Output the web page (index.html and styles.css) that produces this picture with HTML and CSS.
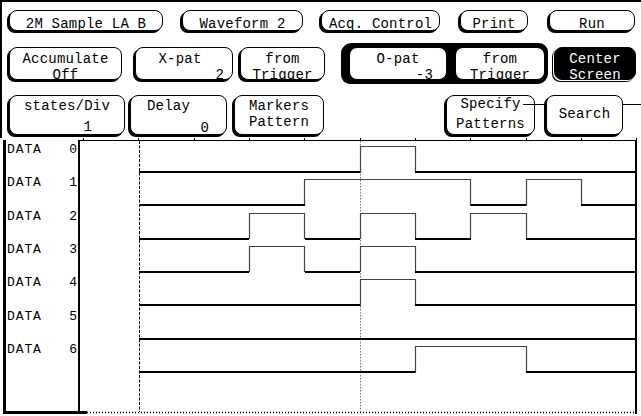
FILE: index.html
```html
<!DOCTYPE html>
<html lang="en">
<head>
  <meta charset="UTF-8">
  <title>Waveform 2</title>
<link rel="stylesheet" href="styles.css">
</head>
<body>

<div class="screen">

 <!-- MENU FIELDS -->
 <div class="controls">

  <div class="row row-top">
    <div class="btn b-sample">2M Sample LA B</div>
    <div class="btn b-wave">Waveform 2</div>
    <div class="btn b-acq">Acq. Control</div>
    <div class="btn b-print">Print</div>
    <div class="btn b-run">Run</div>
  </div>

  <div class="row row-mid">
    <div class="btn b-accum"><span class="ln">Accumulate</span><span class="ln">Off</span></div>
    <div class="btn b-xpat"><span class="ln pull">X-pat</span><span class="ln val">2</span></div>
    <div class="btn b-from"><span class="ln">from</span><span class="ln">Trigger</span></div>
    <div class="group">
      <div class="btn inner b-opat"><span class="ln">O-pat</span><span class="ln val">-3</span></div>
      <div class="btn inner b-from2"><span class="ln">from</span><span class="ln">Trigger</span></div>
    </div>
    <div class="btn inv b-center"><span class="ln">Center</span><span class="ln">Screen</span></div>
  </div>

  <div class="row row-low">
    <div class="btn b-states"><span class="ln">states/Div</span><span class="ln val">1</span></div>
    <div class="btn b-delay"><span class="ln lead">Delay</span><span class="ln val">0</span></div>
    <div class="btn b-markers"><span class="ln">Markers</span><span class="ln">Pattern</span></div>
    <div class="btn b-specify"><span class="ln">Specify</span><span class="ln">Patterns</span></div>
    <div class="btn b-search">Search</div>
  </div>

 </div>

 <!-- WAVEFORM DISPLAY -->
 <div class="wave">
  <div class="labels">
    <div class="label"><span>DATA</span><span>0</span></div>
    <div class="label"><span>DATA</span><span>1</span></div>
    <div class="label"><span>DATA</span><span>2</span></div>
    <div class="label"><span>DATA</span><span>3</span></div>
    <div class="label"><span>DATA</span><span>4</span></div>
    <div class="label"><span>DATA</span><span>5</span></div>
    <div class="label"><span>DATA</span><span>6</span></div>
  </div>

  <svg class="trace" width="561" height="278" viewBox="0 0 561 278">
    <!-- frame -->
    <path class="frame" d="M0 2.5H557"/>
    <path class="frame" d="M3.5 0V2.5M58.5 0V2.5M114.5 0V2.5M169.5 0V2.5M224.5 0V2.5M280.5 0V2.5M335.5 0V2.5M390.5 0V2.5M446.5 0V2.5M501.5 0V2.5M556.5 0V2.5"/>
    <path class="side" d="M556 2V276"/>
    <path class="start" d="M59.5 3V274"/>
    <path class="marker" d="M280.5 3V274"/>
    <path class="base" d="M0 274.5H7"/>
    <path class="dots" d="M7 274.5H556"/>

    <!-- signal edges -->
    <path class="edge" d="M59 34.5H280.5V8.5H335.5V34.5H555"/>
    <path class="edge" d="M59 67.5H224.5V41.5H390.5V67.5H446.5V41.5H501.5V67.5H555"/>
    <path class="edge" d="M59 100.5H169.5V75.5H224.5V100.5H280.5V75.5H335.5V100.5H390.5V75.5H446.5V100.5H555"/>
    <path class="edge" d="M59 133.5H169.5V108.5H224.5V133.5H280.5V108.5H335.5V133.5H555"/>
    <path class="edge" d="M59 167.5H280.5V141.5H335.5V167.5H555"/>
    <path class="edge" d="M59 234.5H335.5V208.5H446.5V234.5H555"/>

    <!-- low levels drawn heavier -->
    <path class="low" d="M59 34H280M335 34H555"/>
    <path class="low" d="M59 67H225M391 67H446M501 67H555"/>
    <path class="low" d="M59 101H169M225 101H280M335 101H391M446 101H555"/>
    <path class="low" d="M59 134H169M225 134H280M335 134H555"/>
    <path class="low" d="M59 167H280M335 167H555"/>
    <path class="low" d="M59 201H555"/>
    <path class="low" d="M59 234H335M446 234H555"/>
  </svg>
 </div>

</div>

</body>
</html>
```

FILE: styles.css
```css
body {
    margin: 0;
    background-color: #fff;
    color: #000;
    font-family: "Liberation Mono", "DejaVu Sans Mono", monospace;
}

.screen {
    width: 641px;
    height: 416px;
    overflow: hidden;
    border-top: 2px solid #000;
    box-sizing: border-box;
}

/* menu fields */

.controls {
    border-left: 2px solid #000;
    padding-top: 8px;
    padding-bottom: 3px;
}

.row {
    display: flex;
}

.row-top {
    height: 21px;
}

.row-mid {
    height: 40px;
    margin-top: 12px;
    align-items: center;
}

.row-low {
    height: 40px;
    margin-top: 12px;
    align-items: flex-start;
}

.btn {
    box-sizing: border-box;
    border: 1px solid #000;
    border-radius: 8px;
    box-shadow: -2px 2px 0 #000;
    background-color: #fff;
    font-size: 14px;
    letter-spacing: 0.2px;
    line-height: 16px;
    text-align: center;
    white-space: pre;
}

.ln {
    display: block;
}

.val {
    text-align: right;
}

.row-top .btn {
    height: 21px;
    padding-top: 5px;
}

.row-mid .btn {
    height: 33px;
    padding-top: 3px;
}

.row-low .btn {
    height: 40px;
    padding-top: 2px;
}

.b-sample  { width: 154px; margin-left: 7px; }
.b-wave    { width: 121px; margin-left: 19px; }
.b-acq     { width: 119px; margin-left: 18px; }
.b-print   { width: 68px;  margin-left: 20px; }
.b-run     { width: 86px;  margin-left: 21px; }

.b-accum   { width: 113px; margin-left: 7px; }
.b-xpat    { width: 98px;  margin-left: 13px; }
.b-xpat .pull { padding-right: 8px; }
.b-xpat .val  { padding-right: 8px; }
.b-from    { width: 85px;  margin-left: 7px; }

.group {
    display: flex;
    gap: 8px;
    box-sizing: border-box;
    width: 206px;
    height: 40px;
    margin-left: 17px;
    padding: 4px 3px 3px 7px;
    border-radius: 9px;
    background-color: #000;
    box-shadow: -1px 1px 0 #000;
}

.group .inner {
    box-shadow: none;
}

.b-opat    { width: 98px; }
.b-opat .val { padding-right: 13px; }
.b-from2   { width: 90px; }

.b-center {
    width: 82px;
    height: 34px;
    margin-left: 6px;
}

.inv {
    background-color: #000;
    color: #fff;
    box-shadow: -1px 1px 0 #fff, -2px 2px 0 #000;
}

.b-states  { width: 116px; margin-left: 7px; }
.b-states .val { margin-top: 5px; padding-right: 32px; }
.b-delay   { width: 97px;  margin-left: 5px; }
.b-delay .lead { text-align: left; padding-left: 16px; }
.b-delay .val  { margin-top: 6px; padding-right: 17px; }
.b-markers { width: 90px;  margin-left: 7px; }

.row-low .b-specify {
    position: relative;
    width: 89px;
    margin-left: 122px;
    padding-top: 0;
}

.b-specify .ln + .ln { margin-top: 4px; }

.b-specify::after {
    content: '';
    position: absolute;
    left: 76px;
    top: 8px;
    width: 130px;
    height: 1px;
    background-color: #000;
}

.row-low .b-search {
    position: relative;
    z-index: 1;
    width: 77px;
    margin-left: 11px;
    padding-top: 10px;
}

/* waveform display */

.wave {
    display: flex;
    height: 278px;
}

.labels {
    width: 72px;
    height: 271px;
    margin-top: 2px;
    margin-left: 3px;
    border-left: 3px solid #000;
    border-right: 2px solid #000;
    border-bottom: 3px solid #000;
    font-size: 13px;
    letter-spacing: 0.9px;
    line-height: 15px;
}

.label {
    display: flex;
    justify-content: space-between;
    height: 33.33px;
    box-sizing: border-box;
    padding: 2px 0 0 1px;
}

.trace {
    display: block;
    fill: none;
}

.frame  { stroke: #000; stroke-width: 1; }
.side   { stroke: #000; stroke-width: 2; }
.start  { stroke: #000; stroke-width: 1; stroke-dasharray: 3 1.5; }
.marker { stroke: #777; stroke-width: 1; stroke-dasharray: 1.5 1.5; }
.base   { stroke: #000; stroke-width: 3; }
.dots   { stroke: #000; stroke-width: 1.5; stroke-dasharray: 1 2; }
.edge   { stroke: #444; stroke-width: 1.2; }
.low    { stroke: #000; stroke-width: 2; }
```
